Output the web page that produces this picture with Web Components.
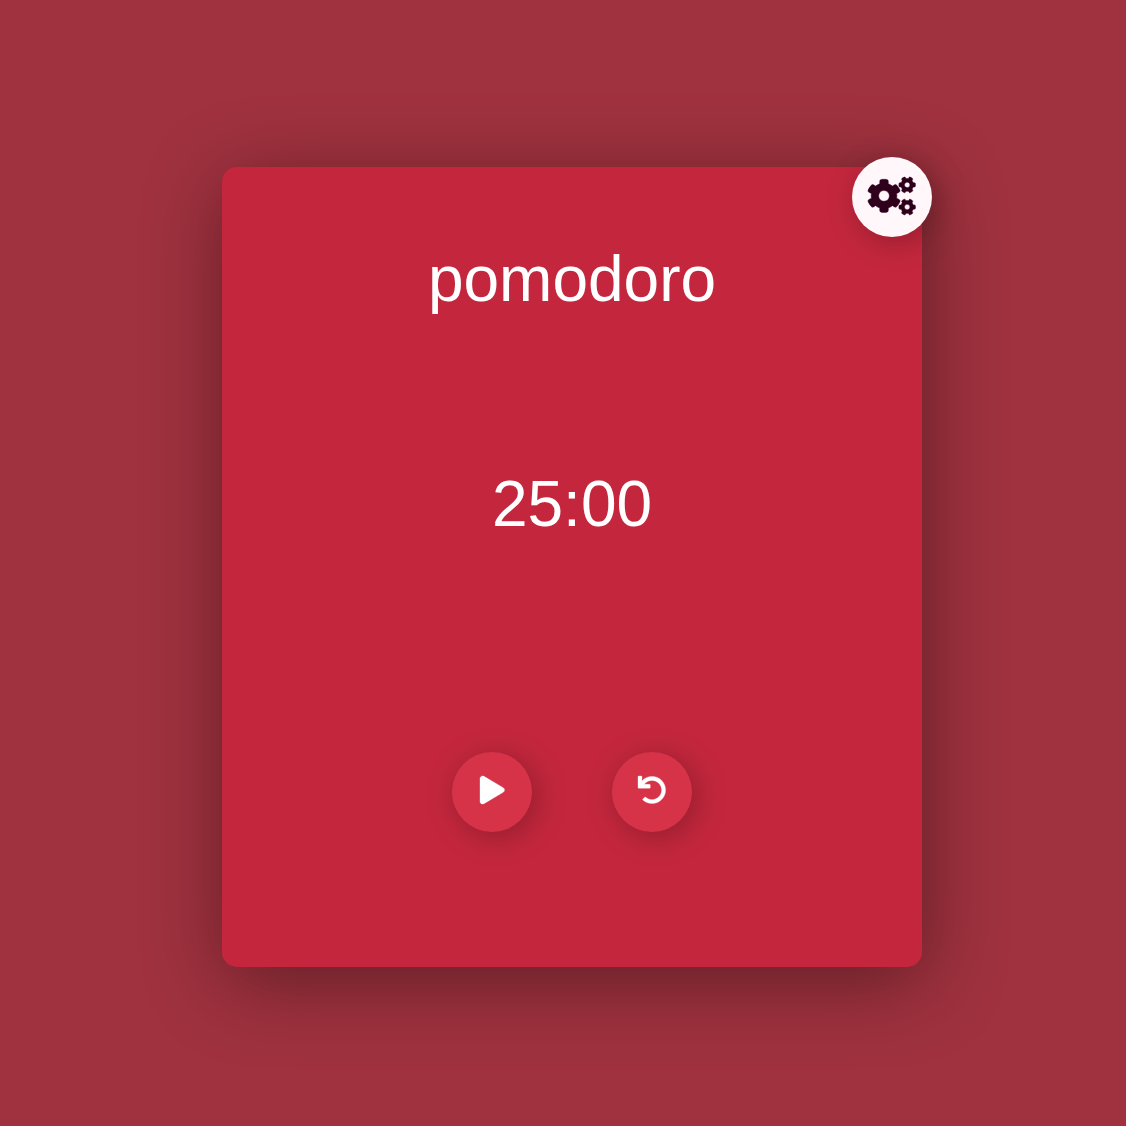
<!DOCTYPE html>
<html lang="en">
<head>
<meta charset="utf-8">
<meta name="viewport" content="width=device-width, initial-scale=1">
<title>pomodoro</title>
<style>
  body { margin: 0; background: #a0323f; font-family: "Liberation Sans", Arial, sans-serif; color: #fff; }
</style>
</head>
<body>
<pomodoro-app></pomodoro-app>

<script>
  class RoundButton extends HTMLElement {
    constructor() {
      super();
      this.attachShadow({ mode: "open" }).innerHTML = `
        <style>
          :host { display: block; }
          button {
            display: flex; justify-content: center; align-items: center;
            width: 80px; height: 80px; padding: 0 0 var(--icon-lift, 4px); box-sizing: border-box;
            border: 0; border-radius: 50%; cursor: pointer;
            background: var(--button-fill, #d63349); color: var(--button-ink, #fff);
            box-shadow: 5px 5px 30px rgba(0, 0, 0, .25);
          }
        </style>
        <button type="button"><slot></slot></button>`;
    }
    connectedCallback() {
      this.shadowRoot.querySelector("button").setAttribute("aria-label", this.getAttribute("label"));
    }
  }
  customElements.define("round-button", RoundButton);

  const smallGear = "l-8.2 14.3c-3 5.3-9.4 7.5-15.1 5.4-11.8-4.4-22.6-10.7-32.1-18.6-4.6-3.8-5.8-10.5-2.8-15.7l8.2-14.3c-6.9-8-12.3-17.3-15.9-27.4h-16.5c-6 0-11.2-4.3-12.2-10.3-2-12-2.1-24.6 0-37.1 1-6 6.2-10.4 12.2-10.4h16.5c3.6-10.1 9-19.4 15.9-27.4l-8.2-14.3c-3-5.2-1.9-11.9 2.8-15.7 9.5-7.9 20.4-14.2 32.1-18.6 5.7-2.1 12.1.1 15.1 5.4l8.2 14.3c10.5-1.9 21.2-1.9 31.7 0l8.2-14.3c3-5.3 9.4-7.5 15.1-5.4 11.8 4.4 22.6 10.7 32.1 18.6 4.6 3.8 5.8 10.5 2.8 15.7l-8.2 14.3c6.9 8 12.3 17.3 15.9 27.4h16.5c6 0 11.2 4.3 12.2 10.3 2 12 2.1 24.6 0 37.1-1 6-6.2 10.4-12.2 10.4h-16.5c-3.6 10.1-9 19.4-15.9 27.4l8.2 14.3c3 5.2 1.9 11.9-2.8 15.7-9.5 7.9-20.4 14.2-32.1 18.6-5.7 2.1-12.1-.1-15.1-5.4l-8.2-14.3c-10.4 1.9-21.2 1.9-31.7 0zm-10.5-58.8c38.5 29.6 82.4-14.3 52.8-52.8-38.5-29.7-82.4 14.3-52.8 52.8z";
  const icons = {
    play: [448, "M424.4 214.7L72.4 6.6C43.8-10.3 0 6.1 0 47.9V464c0 37.5 40.7 60.1 72.4 41.3l352-208c31.4-18.5 31.5-64.1 0-82.6z"],
    undo: [512, "M212.333 224.333H12c-6.627 0-12-5.373-12-12V12C0 5.373 5.373 0 12 0h48c6.627 0 12 5.373 12 12v78.112C117.773 39.279 184.26 7.47 258.175 8.007c136.906.994 246.448 111.623 246.157 248.532C504.041 393.258 393.12 504 256.333 504c-64.089 0-122.496-24.313-166.51-64.215-5.099-4.622-5.334-12.554-.467-17.42l33.967-33.967c4.474-4.474 11.662-4.717 16.401-.525C170.76 415.336 211.58 432 256.333 432c97.268 0 176-78.716 176-176 0-97.267-78.716-176-176-176-58.496 0-110.28 28.476-142.274 72.333h98.274c6.627 0 12 5.373 12 12v48c0 6.627-5.373 12-12 12z"],
    gears: [640, "M512.1 191" + smallGear + "M386.3 286.1l33.7 16.8c10.1 5.8 14.5 18.1 10.5 29.1-8.9 24.2-26.4 46.4-42.6 65.8-7.4 8.9-20.2 11.1-30.3 5.3l-29.1-16.8c-16 13.7-34.6 24.6-54.9 31.7v33.6c0 11.6-8.3 21.6-19.7 23.6-24.6 4.2-50.4 4.4-75.9 0-11.5-2-20-11.9-20-23.6V418c-20.3-7.2-38.9-18-54.9-31.7L74 403c-10 5.8-22.9 3.6-30.3-5.3-16.2-19.4-33.3-41.6-42.2-65.7-4-10.9.4-23.2 10.5-29.1l33.3-16.8c-3.9-20.9-3.9-42.4 0-63.4L12 205.8c-10.1-5.8-14.6-18.1-10.5-29 8.9-24.2 26-46.4 42.2-65.8 7.4-8.9 20.2-11.1 30.3-5.3l29.1 16.8c16-13.7 34.6-24.6 54.9-31.7V57.1c0-11.5 8.2-21.5 19.6-23.5 24.6-4.2 50.5-4.4 76-.1 11.5 2 20 11.9 20 23.6v33.6c20.3 7.2 38.9 18 54.9 31.7l29.1-16.8c10-5.8 22.9-3.6 30.3 5.3 16.2 19.4 33.2 41.6 42.1 65.8 4 10.9.1 23.2-10 29.1l-33.7 16.8c3.9 21 3.9 42.5 0 63.5zm-117.6 21.1c59.2-77-28.7-164.9-105.7-105.7-59.2 77 28.7 164.9 105.7 105.7zM512.1 489.9" + smallGear]
  };

  class SolidIcon extends HTMLElement {
    connectedCallback() {
      const [width, path] = icons[this.getAttribute("name")];
      this.attachShadow({ mode: "open" }).innerHTML = `
        <style>
          :host { display: block; height: var(--icon-size, 28px); }
          svg { display: block; height: 100%; fill: currentColor; stroke: currentColor; stroke-width: 6; overflow: visible; }
        </style>
        <svg viewBox="0 0 ${width} 512" aria-hidden="true"><path d="${path}"/></svg>`;
    }
  }
  customElements.define("solid-icon", SolidIcon);

  class TimerCard extends HTMLElement {
    constructor() {
      super();
      this.attachShadow({ mode: "open" }).innerHTML = `
        <style>
          :host {
            position: relative; display: flex; flex-direction: column; align-items: center;
            width: 100%; max-width: 700px; box-sizing: border-box; padding: 76px 0 135px;
            border-radius: 15px; background: #c4273d;
            box-shadow: 3px 15px 80px rgba(0, 0, 0, .4);
            font-size: 64px; line-height: 72px;
          }
          .controls { display: flex; gap: 80px; margin-top: 212px; }
          ::slotted(h1) { margin: 0 0 153px; font-size: inherit; font-weight: normal; }
          ::slotted([slot="corner"]) { position: absolute; top: -10px; right: -10px; }
        </style>
        <slot name="title"></slot>
        <slot name="time"></slot>
        <div class="controls"><slot></slot></div>
        <slot name="corner"></slot>`;
    }
  }
  customElements.define("timer-card", TimerCard);

  class PomodoroApp extends HTMLElement {
    constructor() {
      super();
      this.attachShadow({ mode: "open" }).innerHTML = `
        <style>
          :host {
            display: flex; justify-content: center; align-items: center;
            min-height: 100vh; box-sizing: border-box; padding: 8px 0 0 18px; overflow: hidden;
          }
          .settings { --button-fill: #fff7f9; --button-ink: #2f001c; --icon-size: 38px; --icon-lift: 2px; }
        </style>
        <timer-card>
          <h1 slot="title">pomodoro</h1>
          <div slot="time" role="timer">25:00</div>
          <round-button label="Start"><solid-icon name="play"></solid-icon></round-button>
          <round-button label="Reset"><solid-icon name="undo"></solid-icon></round-button>
          <round-button slot="corner" class="settings" label="Settings"><solid-icon name="gears"></solid-icon></round-button>
        </timer-card>`;
    }
  }
  customElements.define("pomodoro-app", PomodoroApp);
</script>
</body>
</html>
